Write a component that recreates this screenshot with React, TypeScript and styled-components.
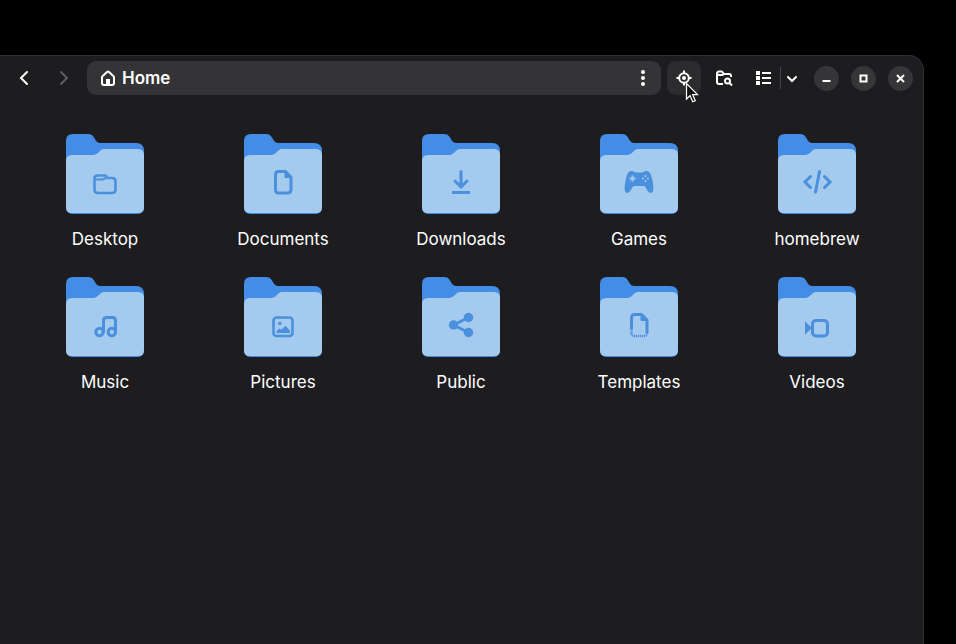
import React from "react";
import styled, { createGlobalStyle } from "styled-components";

const GlobalStyle = createGlobalStyle`
  * { box-sizing: border-box; }
  html, body, #root { height: 100%; }
  body {
    margin: 0;
    background: #000;
    color: #fff;
    font-family: Inter, "Open Sans", sans-serif;
    overflow: hidden;
  }
  button { font: inherit; color: inherit; border: 0; padding: 0; background: none; }
`;

const Desktop = styled.div`
  display: flex;
  height: 100%;
  padding: 55px 32px 0 0;
`;

const Window = styled.main`
  flex: 1;
  display: flex;
  flex-direction: column;
  background: #1d1d1f;
  border: 1px solid #2f2f32;
  border-width: 1px 1px 0 0;
  border-top-right-radius: 15px;
`;

const HeaderBar = styled.header`
  display: flex;
  align-items: center;
  gap: 6px;
  padding: 5px 10px 5px 7px;
`;

const IconButton = styled.button<{ $active?: boolean }>`
  position: relative;
  display: grid;
  place-items: center;
  width: 34px;
  height: 34px;
  border-radius: 9px;
  background: ${(p) => (p.$active ? "#2c2c2e" : "transparent")};
  &:disabled { color: #5f5f62; }
  svg { display: block; }
`;

const PathBar = styled.nav`
  flex: 1;
  display: flex;
  align-items: center;
  justify-content: space-between;
  height: 34px;
  padding: 0 1px 0 12px;
  border-radius: 9px;
  background: #343436;
`;

const PathSegment = styled.button`
  display: flex;
  align-items: center;
  gap: 5px;
  font-size: 17px;
  line-height: 24px;
  font-weight: 600;
  svg { display: block; }
`;

const SplitButton = styled.div`
  display: flex;
  align-items: center;
`;

const Divider = styled.span`
  width: 1px;
  height: 22px;
  background: #454548;
`;

const ViewButton = styled(IconButton)`
  width: 33px;
`;

const MenuToggle = styled(IconButton)`
  width: 22px;
`;

const WindowControls = styled.div`
  display: flex;
  gap: 12px;
  padding-left: 5px;
`;

const ControlButton = styled.button`
  display: grid;
  place-items: center;
  width: 25px;
  height: 25px;
  border-radius: 50%;
  background: #363638;
  svg { display: block; }
`;

const Pointer = styled.svg`
  position: absolute;
  left: 18px;
  top: 21px;
  z-index: 1;
  pointer-events: none;
`;

const FolderGrid = styled.ul`
  display: grid;
  grid-template-columns: repeat(5, 1fr);
  row-gap: 25px;
  margin: 0;
  padding: 34px 17px 0 16px;
  list-style: none;
`;

const FolderItem = styled.li`
  display: flex;
  justify-content: center;
`;

const FolderButton = styled.button`
  display: flex;
  flex-direction: column;
  align-items: center;
  gap: 12px;
  svg { display: block; }
`;

const FolderLabel = styled.span`
  font-size: 17px;
  line-height: 26px;
`;

const BLUE = "#438de6";
const EMBLEM = "#4a90dc";
const PALE = "#a4caee";

const stroke = {
  fill: "none",
  stroke: EMBLEM,
  strokeWidth: 3,
  strokeLinejoin: "round" as const,
};

const emblems: Record<string, React.ReactNode> = {
  Desktop: (
    <g {...stroke} strokeWidth="2.600">
      <path d="M28.500 43v12.500q0 3.500 3.500 3.500h14q3.500 0 3.500-3.500v-8q0-3.500-3.500-3.500h-4.500l-2-2.500h-7.500q-3.500 0-3.500 3z" />
      <path d="M29 45.500h7.500l3.500-1.500" strokeWidth="2" />
    </g>
  ),
  Documents: (
    <g {...stroke}>
      <path d="M34.500 37.500h7l5.500 5.500v12.500q0 3.500-3.500 3.500h-9q-3 0-3-3.500v-14.500q0-3.500 3-3.500z" />
      <path d="M41 37v6.500h6z" fill={EMBLEM} strokeWidth="1" />
    </g>
  ),
  Downloads: (
    <g {...stroke} strokeLinecap="round" strokeLinejoin="miter">
      <path d="M39 37.500v15M33 47l6 6 6-6" />
      <path d="M30 58.500h18" strokeLinecap="butt" />
    </g>
  ),
  Games: (
    <g>
      <path
        d="M32 37c2 0 2.500 1.500 4 1.500h6c1.500 0 2-1.500 4-1.500 3.500 0 5 2.500 6 7.500 1 4 1.500 8 1.300 11-.2 3-2 4.200-4.300 2.800-2.500-1.600-2.800-6.300-5.500-6.300h-9c-2.700 0-3 4.700-5.500 6.300-2.300 1.400-4.100.2-4.300-2.800-.2-3 .3-7 1.300-11 1-5 2.500-7.500 6-7.500z"
        fill={EMBLEM}
      />
      <path d="M32.500 41.500v6M29.500 44.500h6" stroke={PALE} strokeWidth="2" />
      <g fill={PALE}>
        <circle cx="45.500" cy="42" r="1" />
        <circle cx="45.500" cy="47" r="1" />
        <circle cx="43" cy="44.500" r="1" />
        <circle cx="48" cy="44.500" r="1" />
      </g>
    </g>
  ),
  homebrew: (
    <g {...stroke} strokeLinecap="round" strokeLinejoin="miter">
      <path d="M32.500 42.500l-5.500 5.500 5.500 5.500M46.500 42.500l5.500 5.500-5.500 5.500M41.500 37.500l-4 20.500" />
    </g>
  ),
  Music: (
    <g {...stroke}>
      <circle cx="33.500" cy="55" r="3.700" />
      <circle cx="45.800" cy="55" r="3.700" />
      <path d="M37.500 55.500v-12q0-3 3-3h6q3 0 3 3v12" />
    </g>
  ),
  Pictures: (
    <g>
      <rect x="29.500" y="40.500" width="19" height="18.500" rx="3" {...stroke} strokeWidth="2.600" />
      <circle cx="35.800" cy="46.500" r="1.700" fill={EMBLEM} />
      <path d="M32.500 56v-2l3-2.500 2 1.200 4-4 4.500 5v2.300z" fill={EMBLEM} />
    </g>
  ),
  Public: (
    <g fill={EMBLEM}>
      <path d="M46.500 40.500L31.500 48l15 7.500" {...stroke} />
      <circle cx="46.500" cy="40.500" r="4.700" />
      <circle cx="31.500" cy="48" r="4.700" />
      <circle cx="46.500" cy="55.500" r="4.700" />
    </g>
  ),
  Templates: (
    <g {...stroke}>
      <path d="M31.500 52v-11q0-3.500 3-3.500h7l5.500 5.500v13" />
      <path d="M41 37v6.500h6z" fill={EMBLEM} strokeWidth="1" />
      <path d="M31.500 52v4q0 3 3 3h9.500q3 0 3-3" strokeWidth="2.500" strokeDasharray="1.200 .8" />
    </g>
  ),
  Videos: (
    <g>
      <rect x="34.500" y="43.500" width="15" height="15.500" rx="3.500" {...stroke} />
      <path d="M27 44.500l7 6.500-7 6.500z" fill={EMBLEM} />
    </g>
  ),
};

function Folder({ name }: { name: string }) {
  return (
    <FolderItem>
      <FolderButton type="button">
        <svg width="78" height="80" viewBox="0 0 78 80" aria-hidden="true">
          <path
            d="M7 0h15c3 0 4.500 1 6 3.500l1.500 2.500c1.200 2 2.500 3 5 3H70q8 0 8 8v56.500q0 6.500-6.500 6.500h-65Q0 80 0 73.500V7q0-7 7-7z"
            fill={BLUE}
          />
          <path
            d="M6 21h20c2.500 0 4-.6 5.500-1.800l3-2.600C36 15.400 37 15 39 15h33q6 0 6 6v52q0 6-6 6H6q-6 0-6-6V27q0-6 6-6z"
            fill={PALE}
          />
          {emblems[name]}
        </svg>
        <FolderLabel>{name}</FolderLabel>
      </FolderButton>
    </FolderItem>
  );
}

const line = { fill: "none", stroke: "currentColor", strokeWidth: 2 };

export default function App() {
  return (
    <>
      <GlobalStyle />
      <Desktop>
        <Window>
          <HeaderBar>
            <IconButton type="button" aria-label="Back">
              <svg width="16" height="16" viewBox="0 0 16 16" {...line} strokeLinecap="round">
                <path d="M11 2L5 8l6 6" />
              </svg>
            </IconButton>
            <IconButton type="button" aria-label="Forward" disabled>
              <svg width="16" height="16" viewBox="0 0 16 16" {...line} strokeLinecap="round">
                <path d="M5 2l6 6-6 6" />
              </svg>
            </IconButton>
            <PathBar aria-label="Location">
              <PathSegment type="button">
                <svg width="18" height="18" viewBox="0 0 18 18" {...line} strokeLinejoin="round">
                  <path
                    d="M3 8.500Q3 7.600 3.700 7L8 3q1-.8 2 0l4.300 4q.7.600.7 1.500V14q0 2-2 2H5q-2 0-2-2z"
                  />
                  <path d="M7 16v-6h4v6z" fill="currentColor" stroke="none" />
                </svg>
                Home
              </PathSegment>
              <IconButton type="button" aria-label="Folder menu">
                <svg width="16" height="18" viewBox="0 0 16 18" fill="currentColor">
                  <circle cx="8" cy="3" r="2" />
                  <circle cx="8" cy="9" r="2" />
                  <circle cx="8" cy="15" r="2" />
                </svg>
              </IconButton>
            </PathBar>
            <IconButton type="button" aria-label="Locate" $active>
              <svg width="16" height="16" viewBox="0 0 16 16" {...line}>
                <circle cx="8" cy="8" r="4.800" />
                <circle cx="8" cy="8" r="2" fill="currentColor" stroke="none" />
                <path d="M8 .5v3M8 12.500v3M.5 8h3M12.500 8h3" />
              </svg>
              <Pointer width="15" height="22" viewBox="0 0 15 22" aria-hidden="true">
                <path
                  d="M1.500 1.500v15.500l3.600-3.400 2.600 6.200 2.600-1.100-2.600-6H12.500z"
                  fill="#111"
                  stroke="#fff"
                  strokeWidth="1.200"
                />
              </Pointer>
            </IconButton>
            <IconButton type="button" aria-label="Search folder">
              <svg width="18" height="18" viewBox="0 0 18 18" {...line}>
                <path d="M8 15H4q-2 0-2-2V5q0-2.500 2-2.500h3L9 5h5q2 0 2 2v1M2 6h5l2-1" strokeLinejoin="round" />
                <circle cx="12.500" cy="12" r="2.500" />
                <path d="M14.500 14l2.500 2.500" />
              </svg>
            </IconButton>
            <SplitButton>
              <ViewButton type="button" aria-label="List view">
                <svg width="17" height="16" viewBox="0 0 17 16" fill="currentColor">
                  <path d="M1 1h4v4H1zM1 6h4v4H1zM1 11h4v4H1zM7 2h9v2H7zM7 7h9v2H7zM7 12h9v2H7z" />
                </svg>
              </ViewButton>
              <Divider />
              <MenuToggle type="button" aria-label="View options">
                <svg width="12" height="12" viewBox="0 0 12 12" {...line} strokeLinecap="round">
                  <path d="M2 5l4 4 4-4" />
                </svg>
              </MenuToggle>
            </SplitButton>
            <WindowControls>
              <ControlButton type="button" aria-label="Minimize">
                <svg width="9" height="9" viewBox="0 0 9 9" {...line}>
                  <path d="M0.500 7h8" />
                </svg>
              </ControlButton>
              <ControlButton type="button" aria-label="Maximize">
                <svg width="9" height="9" viewBox="0 0 9 9" {...line}>
                  <rect x="1.500" y="1.500" width="6" height="6" />
                </svg>
              </ControlButton>
              <ControlButton type="button" aria-label="Close">
                <svg width="9" height="9" viewBox="0 0 9 9" {...line}>
                  <path d="M1 1l7 7M8 1L1 8" />
                </svg>
              </ControlButton>
            </WindowControls>
          </HeaderBar>
          <FolderGrid>
            {Object.keys(emblems).map((name) => (
              <Folder key={name} name={name} />
            ))}
          </FolderGrid>
        </Window>
      </Desktop>
    </>
  );
}
